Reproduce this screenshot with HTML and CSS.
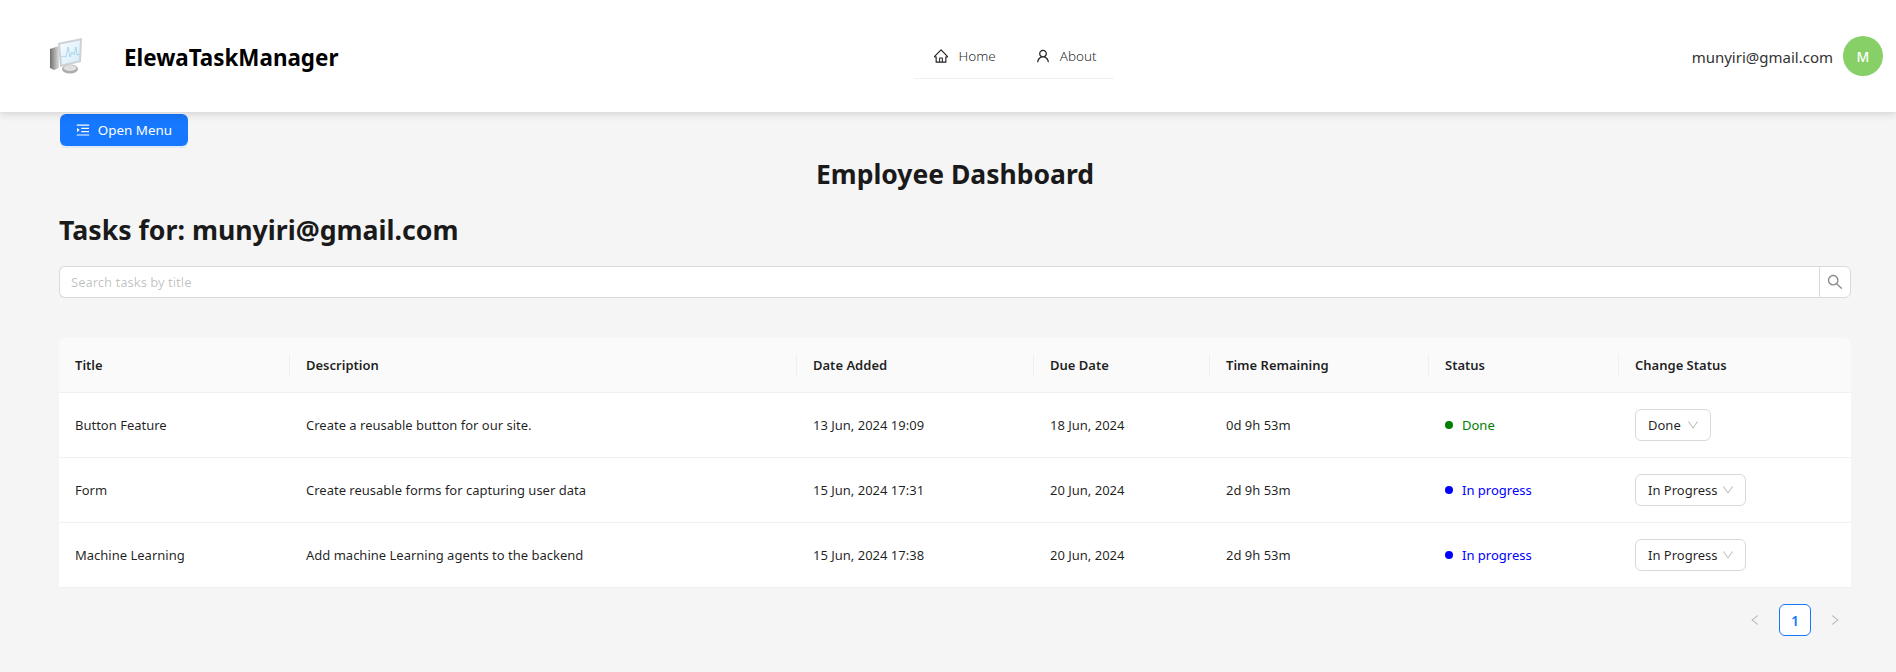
FILE: index.html
```html
<!DOCTYPE html>
<html lang="en">
<head>
    <meta charset="UTF-8">
    <meta name="viewport" content="width=device-width, initial-scale=1.0">
    <title>ElewaTaskManager</title>
    <link rel="stylesheet" href="styles.css">
</head>
<body>
    <svg class="icon-defs" width="0" height="0" aria-hidden="true">
        <symbol id="i-down" viewBox="64 64 896 896"><path d="M884 256h-75c-5.1 0-9.9 2.5-12.9 6.6L512 654.2 227.9 262.6c-3-4.1-7.8-6.6-12.9-6.6h-75c-6.5 0-10.3 7.4-6.5 12.7l352.6 486.1c12.8 17.6 39 17.6 51.7 0l352.6-486.1c3.9-5.3.1-12.7-6.4-12.7z"/></symbol>
        <symbol id="i-left" viewBox="64 64 896 896"><path d="M724 218.3V141c0-6.7-7.7-10.4-12.9-6.3L260.3 486.8a31.86 31.86 0 000 50.3l450.8 352.1c5.3 4.1 12.9.4 12.9-6.3v-77.3c0-4.9-2.3-9.6-6.1-12.6l-360-281 360-281.1c3.8-3 6.1-7.7 6.1-12.6z"/></symbol>
        <symbol id="i-right" viewBox="64 64 896 896"><path d="M765.7 486.8L314.9 134.7A7.97 7.97 0 00302 141v77.3c0 4.9 2.3 9.6 6.1 12.6l360 281.1-360 281.1c-3.9 3-6.1 7.7-6.1 12.6V883c0 6.7 7.7 10.4 12.9 6.3l450.8-352.1a31.96 31.96 0 000-50.4z"/></symbol>
    </svg>

    <header class="topbar">
        <div class="brand">
            <svg class="logo" viewBox="0 0 34 36" aria-hidden="true">
                <defs>
                    <linearGradient id="logo-side" x1="0" y1="0" x2="1" y2="0">
                        <stop offset="0" stop-color="#6f6f6f"/>
                        <stop offset="1" stop-color="#dcdcdc"/>
                    </linearGradient>
                    <linearGradient id="logo-screen" x1="0" y1="0" x2="1" y2="1">
                        <stop offset="0" stop-color="#f6fcff"/>
                        <stop offset="1" stop-color="#d6ebf8"/>
                    </linearGradient>
                </defs>
                <path d="M1 11l9-3v22l-5 2-4-2z" fill="url(#logo-side)"/>
                <ellipse cx="21" cy="31" rx="8" ry="4.5" fill="#ababab"/>
                <ellipse cx="21" cy="30" rx="6.500" ry="3" fill="#e0e0e0"/>
                <path d="M9 5l24-5-1 24-21 5z" fill="#ccd1d5"/>
                <path d="M11 6.500l20-4-1 20-17 4z" fill="url(#logo-screen)"/>
                <path d="M12 19l3-1 2 1 2-10 2 10 2-5 2 3 2-8 1 8 3-1" fill="none" stroke="#a5d0ec" stroke-width="0.9"/>
            </svg>
            <span class="brand-name">ElewaTaskManager</span>
        </div>
        <nav class="menu">
            <a class="menu-item" href="#">
                <svg class="menu-icon" viewBox="64 64 896 896"><path d="M946.5 505L560.1 118.8l-25.9-25.9a31.5 31.5 0 00-44.4 0L77.5 505a63.9 63.9 0 00-18.8 46c.4 35.2 29.7 63.3 64.9 63.3h42.5V940h691.8V614.3h43.4c17.1 0 33.2-6.7 45.3-18.8a63.6 63.6 0 0018.7-45.3c0-17-6.7-33.1-18.8-45.2zM568 868H456V664h112v204zm217.9-325.7V868H632V640c0-22.1-17.9-40-40-40H432c-22.1 0-40 17.9-40 40v228H238.1V542.3h-96l370-369.7 23.1 23.1L882 542.3h-96.1z"/></svg>
                Home
            </a>
            <a class="menu-item" href="#">
                <svg class="menu-icon" viewBox="64 64 896 896"><path d="M858.5 763.6a374 374 0 00-80.6-119.5 375.63 375.63 0 00-119.5-80.6c-.4-.2-.8-.3-1.2-.5C719.5 518 760 444.7 760 362c0-137-111-248-248-248S264 225 264 362c0 82.7 40.5 156 102.8 201.1-.4.2-.8.3-1.2.5-44.8 18.9-85 46-119.5 80.6a375.63 375.63 0 00-80.6 119.5A371.7 371.7 0 00136 901.8a8 8 0 008 8.2h60c4.4 0 7.9-3.5 8-7.8 2-77.2 33-149.5 87.8-204.3 56.7-56.7 132-87.9 212.2-87.9s155.5 31.2 212.2 87.9C779 752.7 810 825 812 902.2c.1 4.4 3.6 7.8 8 7.8h60a8 8 0 008-8.2c-1-47.8-10.9-94.3-29.5-138.2zM512 534c-45.9 0-89.1-17.9-121.6-50.4S340 407.9 340 362c0-45.9 17.9-89.1 50.4-121.6S466.1 190 512 190s89.1 17.9 121.6 50.4S684 316.1 684 362c0 45.9-17.9 89.1-50.4 121.6S557.9 534 512 534z"/></svg>
                About
            </a>
        </nav>
        <div class="user">
            <span class="user-email">munyiri@gmail.com</span>
            <span class="avatar">M</span>
        </div>
    </header>

    <main class="content">
        <button class="open-menu">
            <svg class="open-menu-icon" viewBox="64 64 896 896"><path d="M408 442h480c4.4 0 8-3.6 8-8v-56c0-4.4-3.6-8-8-8H408c-4.4 0-8 3.6-8 8v56c0 4.4 3.6 8 8 8zm-8 204c0 4.4 3.6 8 8 8h480c4.4 0 8-3.6 8-8v-56c0-4.4-3.6-8-8-8H408c-4.4 0-8 3.6-8 8v56zm504-486H120c-4.4 0-8 3.6-8 8v56c0 4.4 3.6 8 8 8h784c4.4 0 8-3.6 8-8v-56c0-4.4-3.6-8-8-8zm0 632H120c-4.4 0-8 3.6-8 8v56c0 4.4 3.6 8 8 8h784c4.4 0 8-3.6 8-8v-56c0-4.4-3.6-8-8-8zM142.4 642.1L298.7 519a8.84 8.84 0 000-13.9L142.4 381.9c-5.8-4.6-14.4-.5-14.4 6.9v246.3a8.9 8.9 0 0014.4 7z"/></svg>
            Open Menu
        </button>

        <h1 class="page-title">Employee Dashboard</h1>
        <h2 class="tasks-title">Tasks for: munyiri@gmail.com</h2>

        <div class="search">
            <input class="search-input" type="text" placeholder="Search tasks by title">
            <button class="search-btn" aria-label="Search">
                <svg class="search-icon" viewBox="64 64 896 896"><path d="M909.6 854.5L649.9 594.8C690.2 542.7 712 479 712 412c0-80.2-31.3-155.4-87.9-212.1-56.6-56.7-132-87.9-212.1-87.9s-155.5 31.3-212.1 87.9C143.2 256.5 112 331.8 112 412c0 80.1 31.3 155.5 87.9 212.1C256.5 680.8 331.8 712 412 712c67 0 130.6-21.8 182.7-62l259.7 259.6a8.2 8.2 0 0011.6 0l43.6-43.5a8.2 8.2 0 000-11.6zM570.4 570.4C528 612.7 471.8 636 412 636s-116-23.3-158.4-65.6C211.3 528 188 471.8 188 412s23.3-116.1 65.6-158.4C296 211.3 352.2 188 412 188s116.1 23.2 158.4 65.6S636 352.2 636 412s-23.3 116.1-65.6 158.4z"/></svg>
            </button>
        </div>

        <table class="tasks">
            <colgroup>
                <col class="col-title">
                <col class="col-desc">
                <col class="col-added">
                <col class="col-due">
                <col class="col-remaining">
                <col class="col-status">
                <col class="col-change">
            </colgroup>
            <thead>
                <tr>
                    <th>Title</th>
                    <th>Description</th>
                    <th>Date Added</th>
                    <th>Due Date</th>
                    <th>Time Remaining</th>
                    <th>Status</th>
                    <th>Change Status</th>
                </tr>
            </thead>
            <tbody>
                <tr>
                    <td>Button Feature</td>
                    <td>Create a reusable button for our site.</td>
                    <td>13 Jun, 2024 19:09</td>
                    <td>18 Jun, 2024</td>
                    <td>0d 9h 53m</td>
                    <td><span class="status status-done">Done</span></td>
                    <td><span class="select select-done">Done <svg class="select-arrow"><use href="#i-down"/></svg></span></td>
                </tr>
                <tr>
                    <td>Form</td>
                    <td>Create reusable forms for capturing user data</td>
                    <td>15 Jun, 2024 17:31</td>
                    <td>20 Jun, 2024</td>
                    <td>2d 9h 53m</td>
                    <td><span class="status status-progress">In progress</span></td>
                    <td><span class="select select-progress">In Progress <svg class="select-arrow"><use href="#i-down"/></svg></span></td>
                </tr>
                <tr>
                    <td>Machine Learning</td>
                    <td>Add machine Learning agents to the backend</td>
                    <td>15 Jun, 2024 17:38</td>
                    <td>20 Jun, 2024</td>
                    <td>2d 9h 53m</td>
                    <td><span class="status status-progress">In progress</span></td>
                    <td><span class="select select-progress">In Progress <svg class="select-arrow"><use href="#i-down"/></svg></span></td>
                </tr>
            </tbody>
        </table>

        <div class="pagination">
            <span class="page-arrow"><svg class="page-arrow-icon"><use href="#i-left"/></svg></span>
            <span class="page-current">1</span>
            <span class="page-arrow"><svg class="page-arrow-icon"><use href="#i-right"/></svg></span>
        </div>
    </main>
</body>
</html>
```

FILE: styles.css
```css
* {
    box-sizing: border-box;
}

body {
    margin: 0;
    height: 672px;
    overflow: hidden;
    background-color: #f5f5f5;
    font-family: "Noto Sans", "Open Sans", sans-serif;
    font-size: 13px;
    color: rgba(0, 0, 0, 0.88);
}

.icon-defs {
    position: absolute;
}

/* top bar */
.topbar {
    height: 112px;
    display: flex;
    align-items: center;
    padding: 0 13px 0 49px;
    background-color: #fff;
    box-shadow: 0 2px 8px rgba(0, 0, 0, 0.15);
    position: relative;
}

.brand {
    width: 865px;
    display: flex;
    align-items: center;
    gap: 41px;
}

.logo {
    width: 34px;
    height: 36px;
}

.brand-name {
    padding-top: 2px;
    font-size: 22.4px;
    font-weight: 700;
    color: #000;
}

.menu {
    width: 200px;
    height: 47px;
    display: flex;
    justify-content: center;
    padding-left: 3px;
    border-bottom: 1px solid #f0f0f0;
    margin-top: -1px;
}

.menu-item {
    display: flex;
    align-items: center;
    gap: 10px;
    padding: 2px 20px 0;
    color: rgba(0, 0, 0, 0.88);
    text-decoration: none;
    font-size: 13.5px;
    font-weight: 300;
}

.menu-icon {
    width: 14px;
    height: 14px;
    fill: currentColor;
}

.user {
    display: flex;
    align-items: center;
    gap: 10px;
    margin-left: auto;
}

.user-email {
    padding-top: 1px;
    font-size: 15px;
    color: #333;
}

.avatar {
    width: 40px;
    height: 40px;
    border-radius: 50%;
    background-color: #87d068;
    color: #fff;
    display: flex;
    align-items: center;
    justify-content: center;
    font-size: 14px;
    font-weight: 500;
}

/* main area */
.content {
    padding: 2px 45px 0 59px;
}

.open-menu {
    width: 128px;
    height: 32px;
    margin-left: 1px;
    display: flex;
    align-items: center;
    justify-content: center;
    gap: 8px;
    border: none;
    border-radius: 6px;
    background-color: #1677ff;
    color: #fff;
    font-family: inherit;
    font-size: 13.4px;
    box-shadow: 0 2px 0 rgba(5, 145, 255, 0.1);
}

.open-menu-icon {
    width: 14px;
    height: 14px;
    fill: currentColor;
}

.page-title {
    margin: 9px 0 0;
    height: 38px;
    line-height: 38px;
    text-align: center;
    font-size: 26.5px;
    font-weight: 700;
    color: #1a1a1a;
}

.tasks-title {
    margin: 18px 0 0;
    height: 38px;
    line-height: 38px;
    font-size: 26.7px;
    font-weight: 700;
    color: #1a1a1a;
}

.search {
    display: flex;
    height: 32px;
    margin-top: 17px;
}

.search-input {
    flex: 1;
    padding: 0 11px;
    border: 1px solid #d9d9d9;
    border-right: none;
    border-radius: 6px 0 0 6px;
    background-color: #fff;
    font-family: inherit;
    font-size: 13px;
    outline: none;
}

.search-input::placeholder {
    color: rgba(0, 0, 0, 0.25);
}

.search-btn {
    width: 32px;
    display: flex;
    align-items: center;
    justify-content: center;
    padding: 0;
    border: 1px solid #d9d9d9;
    border-radius: 0 6px 6px 0;
    background-color: #fff;
}

.search-icon {
    width: 16px;
    height: 16px;
    fill: rgba(0, 0, 0, 0.45);
}

/* task table */
.tasks {
    width: 1792px;
    margin-top: 40px;
    table-layout: fixed;
    border-collapse: separate;
    border-spacing: 0;
    background-color: #fff;
    border-radius: 8px 8px 0 0;
}

.col-title { width: 231px; }
.col-desc { width: 507px; }
.col-added { width: 237px; }
.col-due { width: 176px; }
.col-remaining { width: 219px; }
.col-status { width: 190px; }
.col-change { width: 232px; }

.tasks th {
    height: 55px;
    padding: 0 16px;
    text-align: left;
    font-weight: 600;
    background-color: #fafafa;
    border-bottom: 1px solid #f0f0f0;
    position: relative;
}

.tasks th:first-child {
    border-top-left-radius: 8px;
}

.tasks th:last-child {
    border-top-right-radius: 8px;
}

.tasks th:not(:last-child)::after {
    content: "";
    position: absolute;
    top: 16px;
    right: 0;
    width: 1px;
    height: 22px;
    background-color: #f0f0f0;
}

.tasks td {
    height: 65px;
    padding: 0 16px;
    border-bottom: 1px solid #f0f0f0;
}

.status {
    display: flex;
    align-items: center;
    gap: 9px;
}

.status::before {
    content: "";
    width: 8px;
    height: 8px;
    border-radius: 50%;
    background-color: currentColor;
}

.status-done {
    color: green;
}

.status-progress {
    color: blue;
}

.select {
    height: 32px;
    display: inline-flex;
    align-items: center;
    justify-content: space-between;
    padding: 0 11px 0 12px;
    border: 1px solid #d9d9d9;
    border-radius: 6px;
    background-color: #fff;
    vertical-align: middle;
    white-space: nowrap;
}

.select-done {
    width: 76px;
}

.select-progress {
    width: 111px;
}

.select-arrow {
    width: 12px;
    height: 12px;
    fill: rgba(0, 0, 0, 0.25);
}

/* pagination */
.pagination {
    display: flex;
    justify-content: flex-end;
    gap: 8px;
    margin-top: 16px;
}

.page-arrow {
    width: 32px;
    height: 32px;
    display: flex;
    align-items: center;
    justify-content: center;
}

.page-arrow-icon {
    width: 12px;
    height: 12px;
    fill: rgba(0, 0, 0, 0.25);
}

.page-current {
    width: 32px;
    height: 32px;
    display: flex;
    align-items: center;
    justify-content: center;
    border: 1px solid #1677ff;
    border-radius: 6px;
    background-color: #fff;
    color: #1677ff;
    font-size: 14px;
    font-weight: 600;
}
```
